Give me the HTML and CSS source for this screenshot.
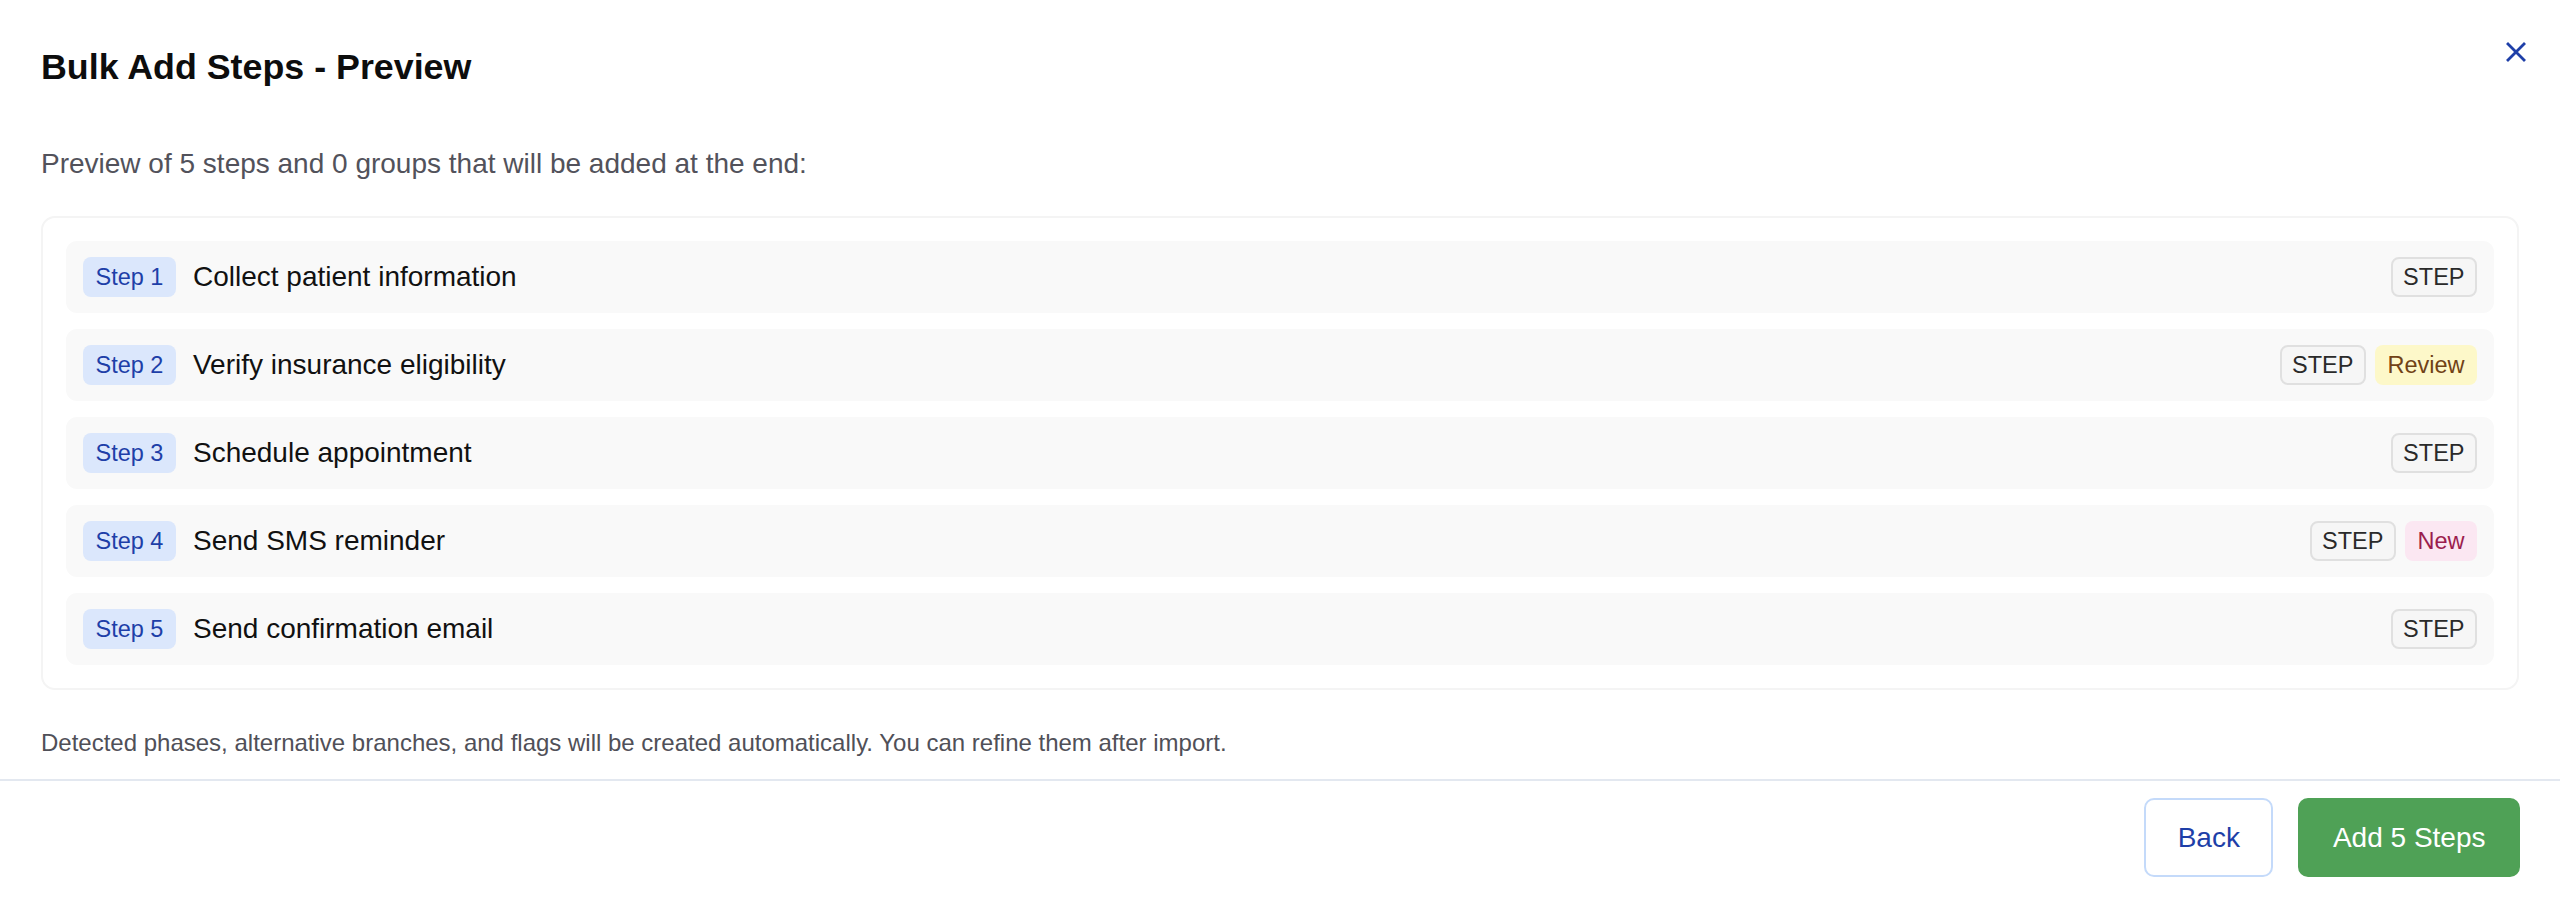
FILE: index.html
```html
<!DOCTYPE html>
<html lang="en">
<head>
<meta charset="utf-8">
<title>Bulk Add Steps - Preview</title>
<link rel="stylesheet" href="styles.css">
</head>
<body>
<div class="dialog">
  <div class="dialog-header">
    <h2 class="dialog-title">Bulk Add Steps - Preview</h2>
    <button class="close-btn" aria-label="Close">
      <svg viewBox="0 0 20 20" width="20" height="20"><path d="M2 2 L18 18 M18 2 L2 18" stroke="#1e3fa8" stroke-width="2.8" stroke-linecap="square" fill="none"/></svg>
    </button>
  </div>
  <div class="dialog-body">
    <p class="summary">Preview of 5 steps and 0 groups that will be added at the end:</p>
    <div class="preview-list">
      <div class="step-row">
        <span class="step-num">Step 1</span>
        <span class="step-name">Collect patient information</span>
        <span class="chips"><span class="chip chip-type">STEP</span></span>
      </div>
      <div class="step-row">
        <span class="step-num">Step 2</span>
        <span class="step-name">Verify insurance eligibility</span>
        <span class="chips"><span class="chip chip-type">STEP</span><span class="chip chip-review">Review</span></span>
      </div>
      <div class="step-row">
        <span class="step-num">Step 3</span>
        <span class="step-name">Schedule appointment</span>
        <span class="chips"><span class="chip chip-type">STEP</span></span>
      </div>
      <div class="step-row">
        <span class="step-num">Step 4</span>
        <span class="step-name">Send SMS reminder</span>
        <span class="chips"><span class="chip chip-type">STEP</span><span class="chip chip-new">New</span></span>
      </div>
      <div class="step-row">
        <span class="step-num">Step 5</span>
        <span class="step-name">Send confirmation email</span>
        <span class="chips"><span class="chip chip-type">STEP</span></span>
      </div>
    </div>
    <p class="hint">Detected phases, alternative branches, and flags will be created automatically. You can refine them after import.</p>
  </div>
  <div class="dialog-actions">
    <button class="btn btn-outline">Back</button>
    <button class="btn btn-primary">Add 5 Steps</button>
  </div>
</div>
</body>
</html>
```

FILE: styles.css
```css
* { box-sizing: border-box; }

html, body {
  margin: 0;
  padding: 0;
  background: #ffffff;
  font-family: "Liberation Sans", Arial, Helvetica, sans-serif;
  color: #111111;
}

.dialog {
  display: flex;
  flex-direction: column;
  width: 100%;
}

.dialog-header {
  display: flex;
  justify-content: space-between;
  align-items: flex-start;
  padding: 24px 23px 0 41px;
}

.dialog-title {
  margin: 15px 0 0 0;
  font-size: 35.8px;
  line-height: 56px;
  font-weight: 700;
  color: #0d0d0d;
}

.close-btn {
  margin-top: 7px;
  width: 42px;
  height: 42px;
  padding: 0;
  border: none;
  background: transparent;
  display: flex;
  align-items: center;
  justify-content: center;
}

.close-btn svg { display: block; width: 20px; height: 20px; }

.dialog-body {
  padding: 0 41px;
  display: flex;
  flex-direction: column;
}

.summary {
  margin: 48px 0 0 0;
  font-size: 28px;
  line-height: 42px;
  color: #52525b;
}

.preview-list {
  margin-top: 31px;
  border: 2px solid #f4f4f4;
  border-radius: 14px;
  padding: 23px;
  display: flex;
  flex-direction: column;
  gap: 16px;
}

.step-row {
  display: flex;
  align-items: center;
  background: #f9f9f9;
  border-radius: 11px;
  padding: 16px 17px;
  gap: 17px;
}

.step-num {
  flex: none;
  background: #dbe7fc;
  color: #1e3fa8;
  font-size: 23.5px;
  line-height: 36px;
  padding: 2px 12.5px;
  border-radius: 8px;
}

.step-name {
  flex: 1;
  font-size: 28px;
  line-height: 40px;
  color: #111111;
}

.chips {
  display: flex;
  gap: 9px;
  flex: none;
}

.chip {
  font-size: 23.5px;
  line-height: 36px;
  padding: 0 10.5px;
  border: 2px solid transparent;
  border-radius: 8px;
}

.chip-type {
  background: #f6f6f6;
  border-color: #e0e0e0;
  color: #2a2a2a;
}

.chip-review {
  background: #fdf8c9;
  color: #714216;
}

.chip-new {
  background: #fbe7f2;
  color: #9b1d4e;
}

.hint {
  margin: 35px 0 18px 0;
  font-size: 24px;
  line-height: 36px;
  color: #505058;
}

.dialog-actions {
  border-top: 2px solid #e3e8f0;
  display: flex;
  justify-content: flex-end;
  gap: 25px;
  padding: 17px 40px 24px 40px;
}

.btn {
  font-family: "Liberation Sans", Arial, Helvetica, sans-serif;
  font-size: 28px;
  line-height: 42px;
  border-radius: 10px;
  border: 2px solid transparent;
  cursor: pointer;
}

.btn-outline {
  background: #ffffff;
  border-color: #c4dafa;
  color: #1e3fa8;
  padding: 16.5px 31.5px;
}

.btn-primary {
  background: #4fa156;
  border-color: #4fa156;
  color: #ffffff;
  padding: 16.5px 32.5px;
}
```
